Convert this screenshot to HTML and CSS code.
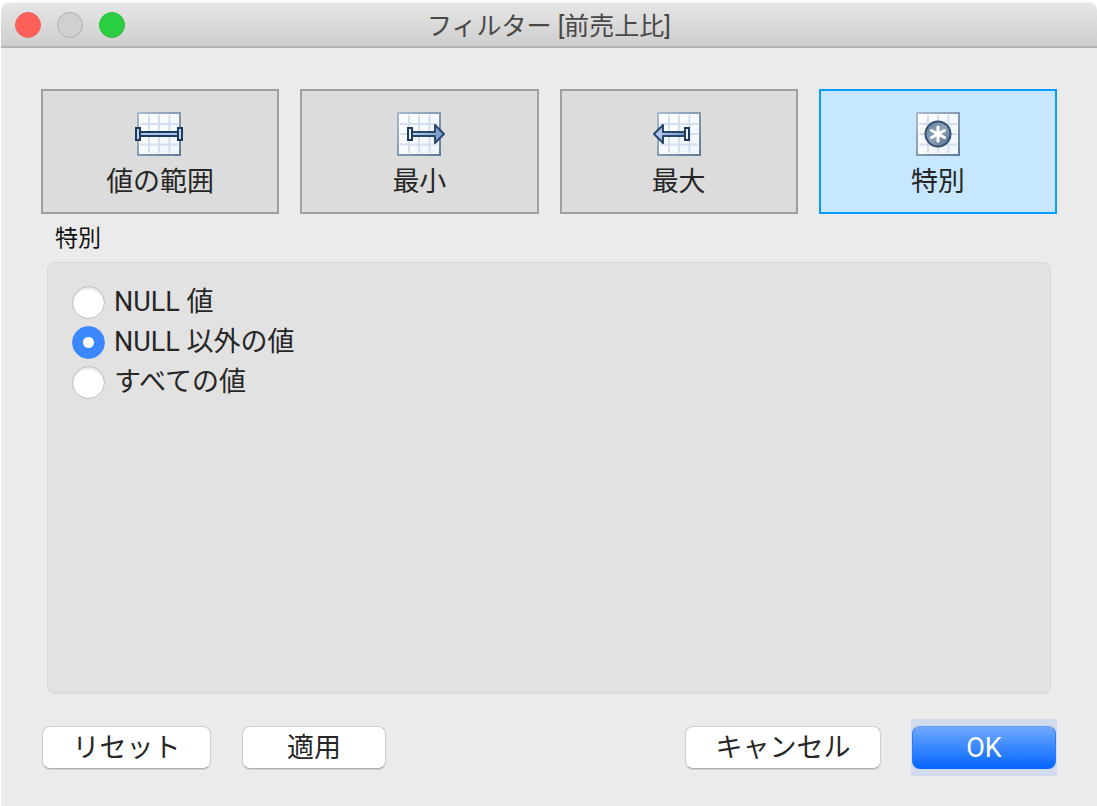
FILE: index.html
```html
<!DOCTYPE html>
<html lang="ja">
<head>
  <meta charset="UTF-8" />
  <meta name="viewport" content="width=device-width, initial-scale=1.0" />
  <title>フィルター [前売上比]</title>
  <link rel="stylesheet" href="styles.css">
</head>
<body>
  <!-- shared gradients and the grid behind every tab icon -->
  <svg class="defs" aria-hidden="true">
    <defs>
      <linearGradient id="frame" x1="0" y1="0" x2="1" y2="1">
        <stop offset="0" stop-color="#a9b9cd" />
        <stop offset="1" stop-color="#5f7a99" />
      </linearGradient>
      <linearGradient id="paper" x1="0" y1="0" x2="1" y2="1">
        <stop offset="0" stop-color="#ffffff" />
        <stop offset="1" stop-color="#eef4fc" />
      </linearGradient>
      <linearGradient id="bar" x1="0" y1="0" x2="1" y2="0">
        <stop offset="0" stop-color="#b9cfef" />
        <stop offset="1" stop-color="#7596c8" />
      </linearGradient>
      <linearGradient id="ball" x1="0" y1="0" x2="1" y2="1">
        <stop offset="0" stop-color="#5d7c9c" />
        <stop offset="0.5" stop-color="#8fa2b7" />
        <stop offset="1" stop-color="#4c6a8c" />
      </linearGradient>
      <symbol id="grid" viewBox="0 0 44 44">
        <rect x="1" y="1" width="42" height="42" fill="url(#paper)" stroke="url(#frame)" stroke-width="2" />
        <path d="M12 3v38M22 3v38M32.500 3v38M3 12h38M3 22h38M3 32.500h38" stroke="#d3def0" stroke-width="2" fill="none" />
      </symbol>
    </defs>
  </svg>

  <header class="titlebar">
    <div class="lights">
      <button class="light close" aria-label="閉じる"></button>
      <button class="light minimize" aria-label="しまう" disabled></button>
      <button class="light zoom" aria-label="拡大"></button>
    </div>
    <h1>フィルター [前売上比]</h1>
  </header>

  <main>
    <nav class="tabs">
      <button class="tab">
        <svg viewBox="0 0 50 44" aria-hidden="true">
          <use href="#grid" x="2" y="0" width="44" height="44" />
          <rect x="5" y="19" width="38" height="6" fill="#1b3a5c" />
          <rect x="5" y="21" width="38" height="2" fill="#a9c3ee" />
          <rect x="1" y="16" width="4" height="12" fill="#c3d6ee" stroke="#1b3a5c" stroke-width="2" />
          <rect x="43" y="16" width="4" height="12" fill="#c3d6ee" stroke="#1b3a5c" stroke-width="2" />
        </svg>
        <span>値の範囲</span>
      </button>
      <button class="tab">
        <svg viewBox="0 0 50 44" aria-hidden="true">
          <use href="#grid" x="3" y="0" width="44" height="44" />
          <path d="M18 20h23v-7l9 9l-9 9v-7H18z" fill="url(#bar)" stroke="#27486b" stroke-width="2" stroke-linejoin="round" />
          <rect x="14" y="16" width="4" height="12" fill="#eaf1fa" stroke="#1b3a5c" stroke-width="2" />
        </svg>
        <span>最小</span>
      </button>
      <button class="tab">
        <svg viewBox="0 0 50 44" aria-hidden="true">
          <use href="#grid" x="3" y="0" width="44" height="44" />
          <path d="M32 20H9v-7L0 22l9 9v-7h23z" fill="url(#bar)" stroke="#27486b" stroke-width="2" stroke-linejoin="round" />
          <rect x="31" y="16" width="4" height="12" fill="#eaf1fa" stroke="#1b3a5c" stroke-width="2" />
        </svg>
        <span>最大</span>
      </button>
      <button class="tab active">
        <svg viewBox="0 0 50 44" aria-hidden="true">
          <use href="#grid" x="3" y="0" width="44" height="44" />
          <circle cx="25" cy="22" r="12.500" fill="url(#ball)" stroke="#34506e" stroke-width="2" />
          <path d="M25 15v14M18.500 18.500l13 7M31.500 18.500l-13 7" stroke="#ffffff" stroke-width="3" stroke-linecap="round" />
        </svg>
        <span>特別</span>
      </button>
    </nav>

    <section class="group" role="radiogroup" aria-labelledby="group-title">
      <h2 id="group-title">特別</h2>
      <div class="panel">
        <label><input type="radio" name="special">NULL 値</label>
        <label><input type="radio" name="special" checked>NULL 以外の値</label>
        <label><input type="radio" name="special">すべての値</label>
      </div>
    </section>

    <footer class="actions">
      <button class="btn reset">リセット</button>
      <button class="btn">適用</button>
      <button class="btn cancel">キャンセル</button>
      <div class="halo">
        <button class="btn primary">OK</button>
      </div>
    </footer>
  </main>
</body>
</html>
```

FILE: styles.css
```css
* {
  box-sizing: border-box;
}
body {
  margin: 0;
  min-height: 100vh;
  display: flex;
  flex-direction: column;
  padding: 2px 0 0 1px;
  background: #fff;
  color: #262626;
  font-family: Roboto, "Noto Sans CJK JP", sans-serif;
  font-size: 27px;
}
button {
  font: inherit;
  color: inherit;
  padding: 0;
}
.defs {
  position: absolute;
  width: 0;
  height: 0;
}

/* title bar */
.titlebar {
  display: grid;
  grid-template-columns: 1fr auto 1fr;
  align-items: center;
  height: 46px;
  padding: 0 14px;
  background: linear-gradient(#e6e6e6, #cecece);
  border-top: 1px solid #f2f2f2;
  border-bottom: 2px solid #b4b4b4;
  border-radius: 8px 8px 0 0;
}
.titlebar h1 {
  margin: 0;
  padding-top: 4px;
  font-size: 25px;
  font-weight: 400;
  line-height: 32px;
  color: #484848;
}
.lights {
  display: flex;
  gap: 16px;
}
.light {
  width: 26px;
  height: 26px;
  border-radius: 50%;
  border: 1px solid;
}
.close {
  background: #ff6159;
  border-color: #e8645c;
}
.minimize {
  background: #d0d0d0;
  border-color: #b0b0b0;
}
.zoom {
  background: #29cf41;
  border-color: #2fb944;
}

main {
  flex: 1;
  display: flex;
  flex-direction: column;
  padding: 41px 40px 37px;
  background: #ebebeb;
}

/* tabs */
.tabs {
  display: grid;
  grid-template-columns: repeat(4, 1fr);
  gap: 21px;
}
.tab {
  display: flex;
  flex-direction: column;
  align-items: center;
  height: 125px;
  padding-top: 21px;
  background: #dcdcdc;
  border: 2px solid #a0a0a0;
}
.tab svg {
  width: 50px;
  height: 44px;
  overflow: visible;
}
.tab span {
  margin-top: 6px;
  line-height: 40px;
}
.tab.active {
  background: #c7e6ff;
  border-color: #0a9bff;
}

/* options */
.group {
  flex: 1;
  display: flex;
  flex-direction: column;
  margin: 9px 6px 0;
}
.group h2 {
  margin: 0;
  padding: 0 8px;
  font-size: 23px;
  font-weight: 400;
  line-height: 32px;
  color: #111;
}
.panel {
  flex: 1;
  margin-top: 7px;
  padding: 19px 24px;
  background: #e2e2e2;
  border: 1px solid #d8d8d8;
  border-radius: 8px;
}
.panel label {
  display: flex;
  align-items: center;
  gap: 9px;
  height: 40px;
  line-height: 40px;
}
.panel input {
  appearance: none;
  width: 33px;
  height: 33px;
  margin: 0;
  background: #fff;
  border: 1px solid #bdbdbd;
  border-radius: 50%;
  box-shadow: inset 0 2px 2px #e4e4e4;
}
.panel input:checked {
  background: radial-gradient(circle, #fff 5px, #3b87fd 6px);
  border-color: #3b87fd;
  box-shadow: none;
}

/* bottom buttons */
.actions {
  display: flex;
  gap: 31px;
  margin-top: 32px;
  padding: 0 0 0 1px;
}
.btn {
  width: 144px;
  height: 43px;
  line-height: 40px;
  background: #fff;
  border: 1px solid #cfcfcf;
  border-bottom-color: #b0b0b0;
  border-radius: 8px;
  box-shadow: 0 1px 1px #d0d0d0;
}
.reset {
  width: 169px;
}
.cancel {
  width: 196px;
  margin-left: auto;
}
.halo {
  display: flex;
  margin: -7px 0;
  padding: 7px 1px;
  margin-left: -1px;
  background: #d2dbee;
  border-radius: 2px;
}
.primary {
  color: #fff;
  background: linear-gradient(#6fa9fd, #0566ff);
  border-color: #5c9bfa #2b7bfb #0566ff;
  box-shadow: none;
}
```
